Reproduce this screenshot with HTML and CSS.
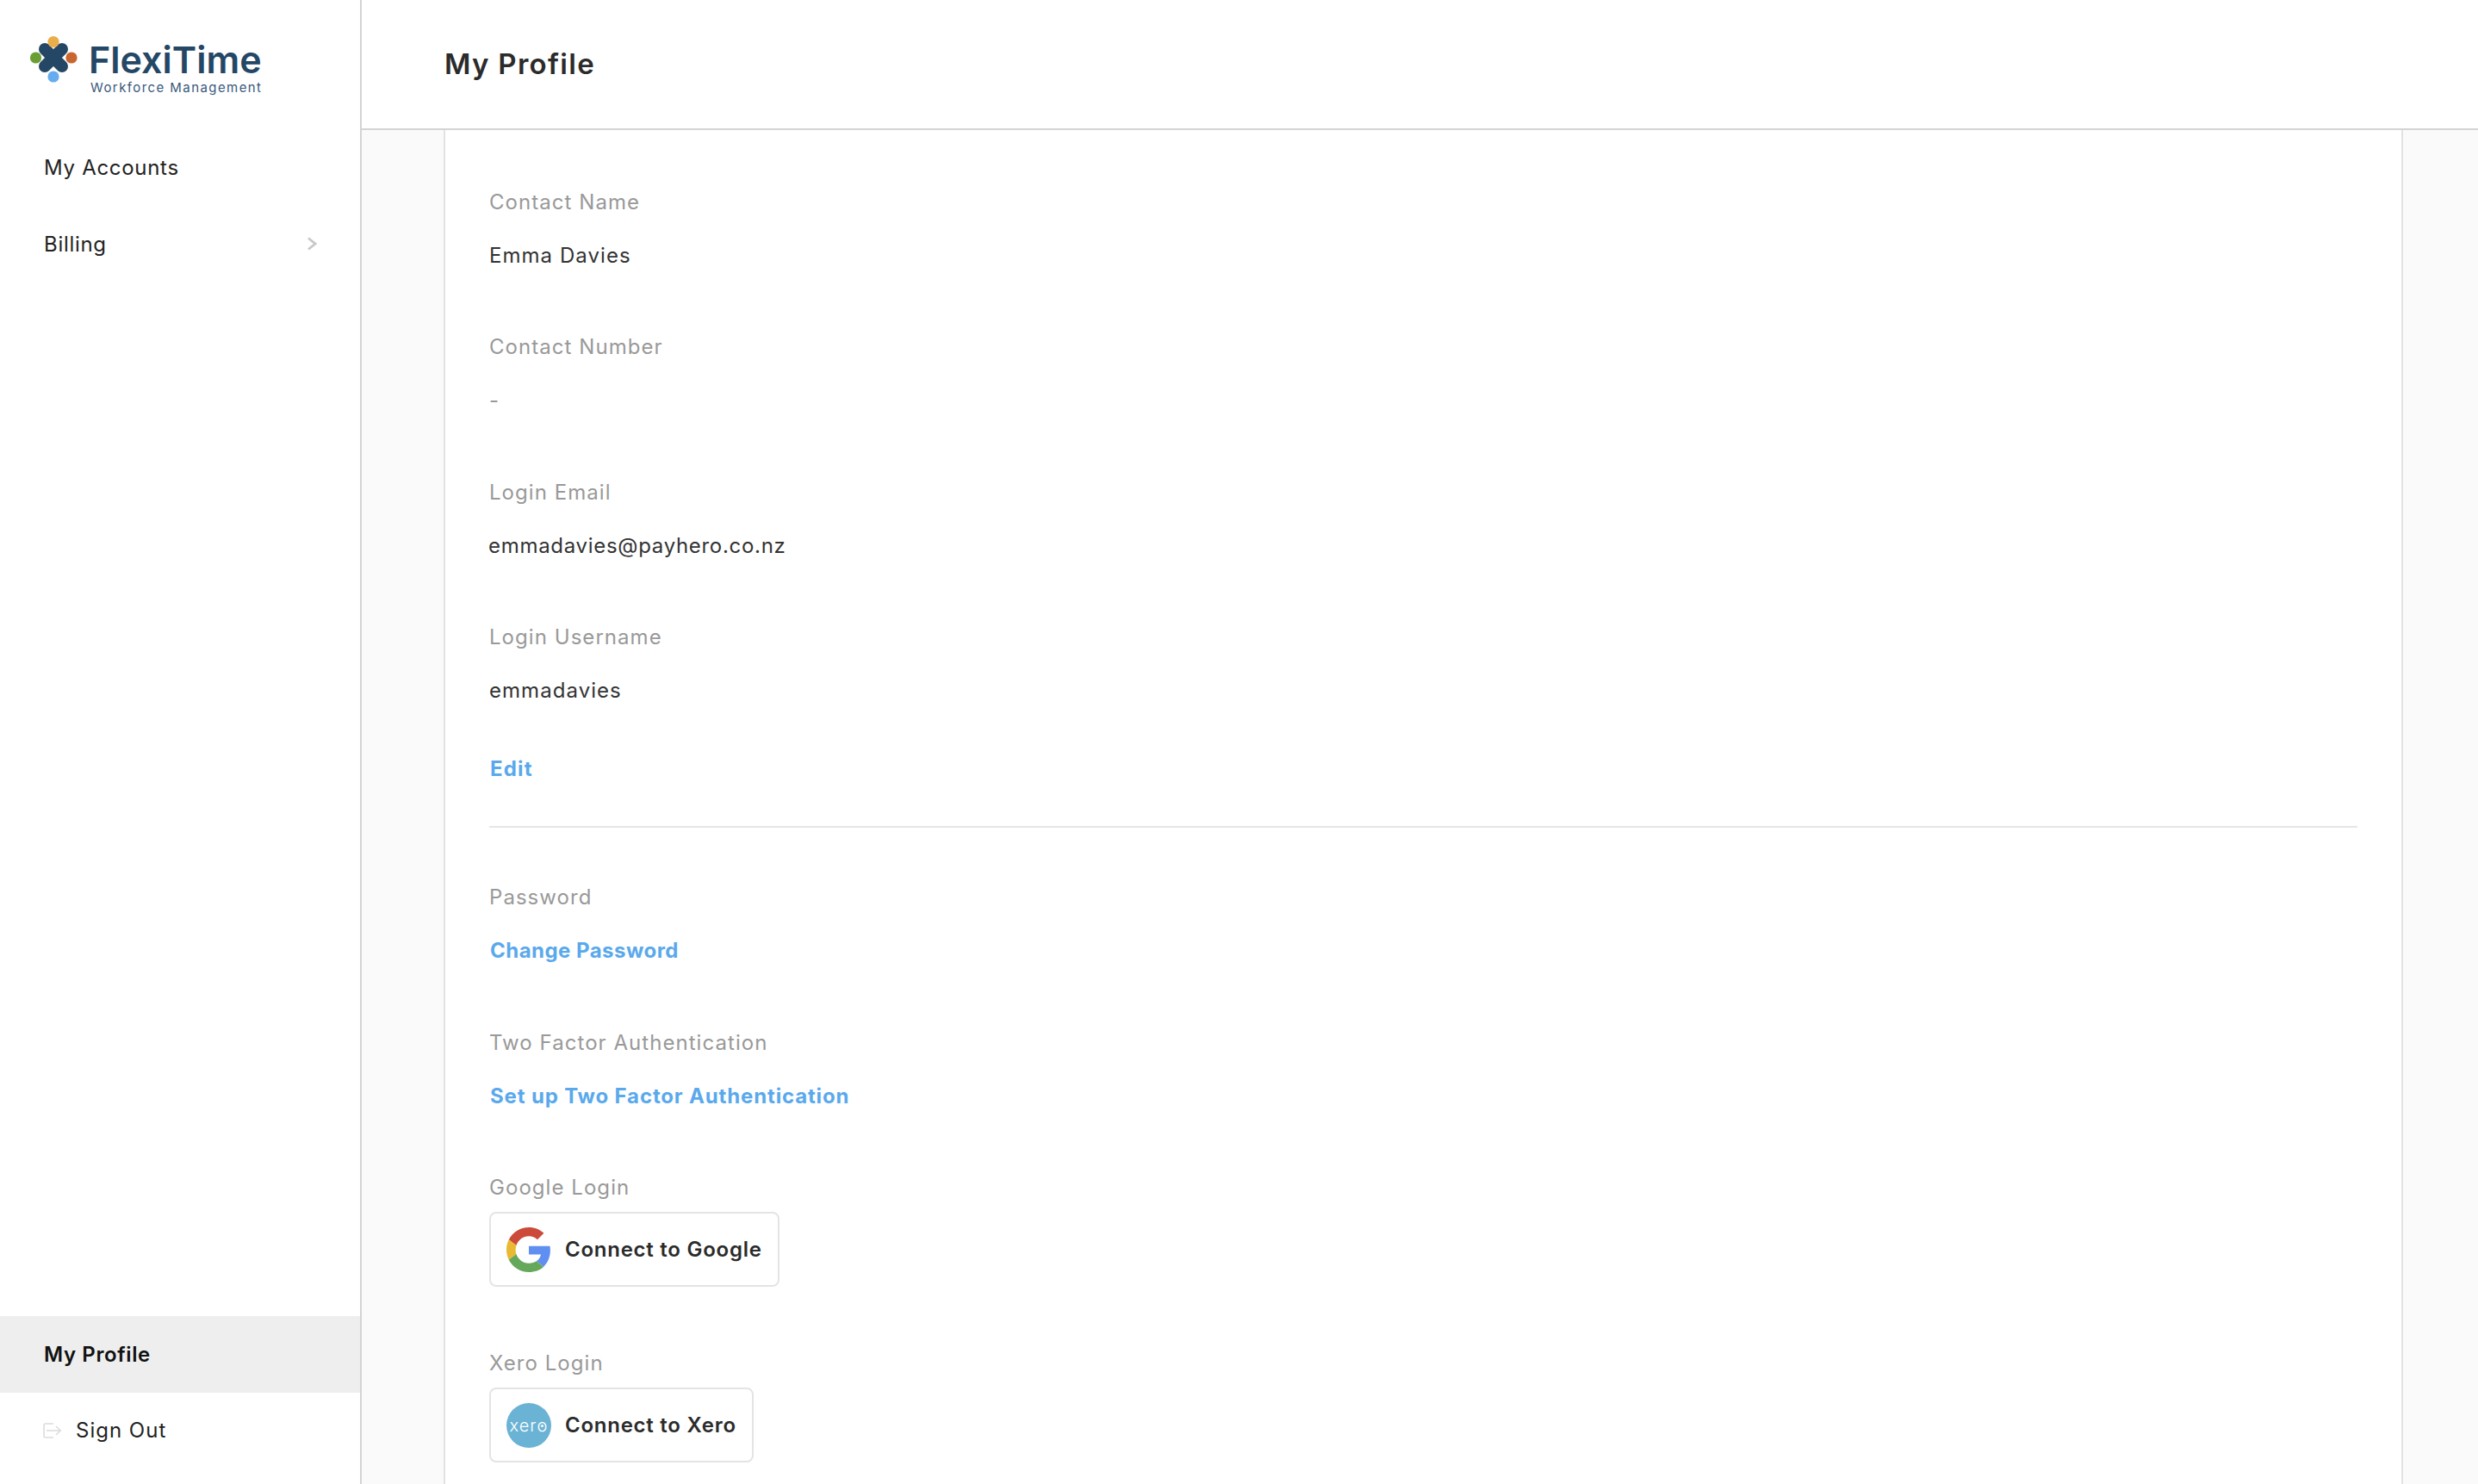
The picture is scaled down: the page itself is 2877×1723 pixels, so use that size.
FILE: index.html
```html
<!DOCTYPE html>
<html lang="en">
<head>
<meta charset="utf-8">
<title>My Profile</title>
<link rel="stylesheet" href="styles.css">
</head>
<body>
<div class="app">
  <aside class="sidebar">
    <div class="logo">
      <svg class="logo-mark" viewBox="0 0 50 50" width="50" height="50" aria-hidden="true">
        <path d="M15 15 L35 35 M35 15 L15 35" stroke="#244765" stroke-width="14" stroke-linecap="round"/>
        <circle cx="25" cy="6.500" r="6.600" fill="#E9AE4A"/>
        <circle cx="4.500" cy="25" r="6.600" fill="#6A9E35"/>
        <circle cx="46" cy="25" r="6.600" fill="#C9662F"/>
        <circle cx="25" cy="47" r="6.600" fill="#66ACEE"/>
      </svg>
      <div class="logo-text">
        <div class="logo-name">FlexiTime</div>
        <div class="logo-sub">Workforce Management</div>
      </div>
    </div>
    <nav class="nav-top">
      <a class="nav-item">My Accounts</a>
      <a class="nav-item">Billing
        <svg class="chevron" viewBox="0 0 12 16" width="12" height="16" aria-hidden="true"><path d="M2 1.500 L10 8 L2 14.500" fill="none" stroke="#c8c8c8" stroke-width="2.800"/></svg>
      </a>
    </nav>
    <nav class="nav-bottom">
      <a class="nav-item active">My Profile</a>
      <a class="nav-item signout">
        <svg class="signout-icon" viewBox="0 0 22 18" width="22" height="18" aria-hidden="true"><path d="M12 1H2.500A1.500 1.500 0 0 0 1 2.500V15.500A1.500 1.500 0 0 0 2.500 17H12" fill="none" stroke="#dcdcdc" stroke-width="1.600"/><path d="M4 9H20M15 4l5.200 5-5.200 5" fill="none" stroke="#dcdcdc" stroke-width="1.600"/></svg>
        Sign Out
      </a>
    </nav>
  </aside>
  <div class="main">
    <header class="topbar"><h1 class="title">My Profile</h1></header>
    <div class="scroll">
      <section class="card">
        <div class="field"><div class="label">Contact Name</div><div class="value">Emma Davies</div></div>
        <div class="field"><div class="label">Contact Number</div><div class="value muted">-</div></div>
        <div class="field"><div class="label">Login Email</div><div class="value email">emmadavies@payhero.co.nz</div></div>
        <div class="field"><div class="label">Login Username</div><div class="value">emmadavies</div></div>
        <a class="link edit">Edit</a>
        <hr class="divider">
        <div class="field"><div class="label">Password</div><a class="value link change">Change Password</a></div>
        <div class="field"><div class="label">Two Factor Authentication</div><a class="value link">Set up Two Factor Authentication</a></div>
        <div class="field connect"><div class="label">Google Login</div>
          <button class="connect-btn">
            <svg class="connect-icon" viewBox="0 0 48 48" width="52" height="52" aria-hidden="true">
              <path fill="#CB4A3A" d="M24 9.500c3.540 0 6.710 1.220 9.210 3.600l6.850-6.850C35.900 2.380 30.470 0 24 0 14.620 0 6.510 5.380 2.560 13.220l7.980 6.190C12.430 13.720 17.740 9.500 24 9.500z"/>
              <path fill="#5F8FF0" d="M46.980 24.550c0-1.570-.15-3.090-.38-4.550H24v9.020h12.940c-.58 2.960-2.260 5.480-4.780 7.180l7.730 6c4.510-4.180 7.090-10.360 7.090-17.650z"/>
              <path fill="#E8B931" d="M10.530 28.590c-.48-1.450-.76-2.990-.76-4.590s.27-3.140.76-4.590l-7.980-6.190C.92 16.460 0 20.120 0 24c0 3.880.92 7.540 2.560 10.780l7.970-6.190z"/>
              <path fill="#66A85B" d="M24 48c6.480 0 11.930-2.130 15.890-5.810l-7.730-6c-2.150 1.450-4.920 2.300-8.160 2.300-6.260 0-11.570-4.220-13.470-9.910l-7.980 6.190C6.510 42.620 14.620 48 24 48z"/>
            </svg>
            Connect to Google
          </button>
        </div>
        <div class="field connect"><div class="label">Xero Login</div>
          <button class="connect-btn">
            <span class="xero-icon">xer<span class="xero-o">o</span></span>
            Connect to Xero
          </button>
        </div>
      </section>
    </div>
  </div>
</div>
</body>
</html>
```
FILE: styles.css
```css
* { box-sizing: border-box; }
html, body { margin: 0; height: 100%; overflow: hidden; }
body { font-family: "Inter", "Liberation Sans", sans-serif; color: #333; background: #fff; }
.app { display: flex; height: 1723px; }
.sidebar { width: 420px; flex: none; border-right: 2px solid #d4d4d4; background: #fff; display: flex; flex-direction: column; }
.logo { display: flex; align-items: flex-start; gap: 13px; padding: 40px 0 0 37px; height: 150px; flex: none; }
.logo-mark { flex: none; margin-top: 2px; overflow: visible; }
.logo-text { margin-left: 3px; }
.logo-name { font-size: 43px; line-height: 47px; font-weight: 600; color: #244765; margin-top: 6px; letter-spacing: 0; }
.logo-sub { font-size: 15px; line-height: 17px; color: #39597a; letter-spacing: 1.42px; margin-left: 2px; }
.nav-item { display: flex; align-items: center; height: 89px; padding: 0 51px; font-size: 24px; color: #222; letter-spacing: 0.7px; position: relative; }
.nav-bottom { margin-top: auto; padding-bottom: 17px; }
.chevron { position: absolute; left: 356px; top: 36px; }
.active { background: #eeeeee; font-weight: 600; color: #111; width: 418px; letter-spacing: 0.6px; }
.signout { padding: 0 51px 2px 50px; gap: 16px; letter-spacing: 1px; }
.signout-icon { flex: none; }
.main { flex: 1; min-width: 0; display: flex; flex-direction: column; background: #fafafa; }
.topbar { height: 151px; flex: none; background: #fff; border-bottom: 2px solid #d4d4d4; display: flex; align-items: center; padding-left: 96px; }
.title { margin: 0 0 1px; font-size: 33px; font-weight: 600; color: #2b2b2b; letter-spacing: 1.3px; }
.scroll { flex: 1; padding: 0 87px 0 95px; overflow: hidden; }
.card { background: #fff; border-left: 2px solid #e2e2e2; border-right: 2px solid #e2e2e2; padding: 63.5px 51px 0; height: 100%; }
.field { margin-bottom: 66.5px; }
.label { font-size: 24px; line-height: 40px; color: #999; letter-spacing: 1.05px; }
.value { display: block; font-size: 24px; line-height: 40px; margin-top: 22px; color: #333; letter-spacing: 1.05px; }
.email { letter-spacing: 0.7px; margin-left: -1px; }
.muted { color: #999; }
.link { color: #5aa9ec; font-weight: 700; font-size: 24px; line-height: 40px; margin-left: 1px; letter-spacing: 0.85px; }
.change { letter-spacing: 0.47px; }
.edit { display: block; margin-top: -15.5px; letter-spacing: 1.2px; }
.divider { border: 0; border-top: 2px solid #e6e6e6; margin: 46px 0 61px; }
.connect { margin-bottom: 69px; }
.connect-btn { display: flex; align-items: center; gap: 16px; height: 87px; margin-top: 8px; padding: 0 18px; background: #fff; border: 2px solid #e4e4e4; border-radius: 8px; font: 600 24px "Inter", "Liberation Sans", sans-serif; color: #2b2b2b; letter-spacing: 0.75px; }
.connect-icon { flex: none; }
.xero-icon { flex: none; width: 52px; height: 52px; border-radius: 50%; background: #6BB3D4; color: #fff; font-size: 20px; font-weight: 300; display: flex; align-items: center; justify-content: center; letter-spacing: 1px; }
.xero-o { position: relative; }
.xero-o::after { content: ""; position: absolute; left: 50%; top: 50%; width: 3px; height: 3px; margin: -1px 0 0 -2px; border-radius: 50%; background: #fff; }
```
